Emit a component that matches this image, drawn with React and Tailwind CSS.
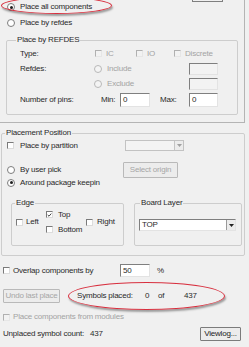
import clsx from 'clsx';

const Radio = ({ checked, disabled }) => (
    <span
        className={clsx(
            "w-[8px] h-[8px] rounded-full border flex items-center justify-center shrink-0",
            disabled ? "border-[#b8b8b8] bg-[#f4f4f4]" : "border-[#7d7d7d] bg-white"
        )}
    >
        {checked && <span className="w-[3px] h-[3px] rounded-full bg-[#1e1e1e]" />}
    </span>
);

const Check = ({ checked, disabled }) => (
    <span
        className={clsx(
            "w-[7px] h-[7px] border shrink-0 flex items-center justify-center",
            disabled
                ? "border-t-[#b0b0b0] border-l-[#b0b0b0] border-b-[#e6e6e6] border-r-[#e6e6e6] bg-[#f2f2f2]"
                : "border-t-[#7a7a7a] border-l-[#7a7a7a] border-b-[#dcdcdc] border-r-[#dcdcdc] bg-white"
        )}
    >
        {checked && (
            <svg viewBox="0 0 7 7" className="w-[6px] h-[6px]">
                <path d="M1 3.5 L2.8 5.2 L6 1.5" fill="none" stroke="#1e1e1e" strokeWidth="1.2" />
            </svg>
        )}
    </span>
);

const TextBox = ({ value, disabled, className }) => (
    <div
        className={clsx(
            "border border-t-[#7f7f7f] border-l-[#7f7f7f] border-b-[#e3e3e3] border-r-[#e3e3e3] flex items-center pl-[2px] leading-none",
            disabled ? "bg-[#f3f3f3] text-[#8a8a8a]" : "bg-white",
            className
        )}
    >
        {value}
    </div>
);

const Button = ({ children, disabled, className }) => (
    <div
        className={clsx(
            "border rounded-[1px] flex items-center justify-center leading-none bg-[#ececec] shrink-0",
            disabled ? "border-[#b9b9b9] text-[#a6a6a6]" : "border-[#7b7b7b] text-[#222]",
            className
        )}
    >
        {children}
    </div>
);

const Arrow = ({ disabled }) => (
    <span
        className={clsx(
            "w-[9px] h-full border-l flex items-center justify-center bg-[#ececec]",
            disabled ? "border-[#c4c4c4]" : "border-[#9a9a9a]"
        )}
    >
        <svg viewBox="0 0 5 3" className="w-[5px] h-[3px]">
            <path d="M0 0 H5 L2.5 3 Z" fill={disabled ? '#a0a0a0' : '#222'} />
        </svg>
    </span>
);

const Group = ({ title, titleClass, className, children }) => (
    <fieldset className={clsx("border border-[#cdcdcd] rounded-[2px] min-w-0", className)}>
        <legend className={clsx("px-[1px] leading-none", titleClass)}>{title}</legend>
        {children}
    </fieldset>
);

const Ellipse = ({ className }) => (
    <div
        className={clsx(
            "absolute rounded-[50%] border-[1.5px] border-[#d8303f] shadow-[1px_2px_2px_rgba(0,0,0,0.35)] pointer-events-none",
            className
        )}
    />
);

export default function App() {
    return (
        <div
            className="relative w-[249px] h-[347px] overflow-hidden bg-[#f0f0f0] text-[8px] tracking-[-0.2px] text-[#2a2a2a] leading-none whitespace-nowrap"
            style={{ fontFamily: '"Liberation Sans", Arial, sans-serif' }}
        >
            {/* Place by refdes section */}
            <div className="relative w-[245px] h-[123px] border-r border-b border-[#b4b4b4]">
                <div className="flex items-start h-[14px]">
                    <div className="flex items-center gap-[5px] pl-[7px] h-[14px]">
                        <Radio checked />
                        <span>Place all components</span>
                    </div>
                    <div className="ml-auto mr-[21px] -mt-[1px] w-[31px] h-[3px] border-x border-b border-[#7f7f7f]" />
                </div>
                <div className="flex items-center gap-[5px] pl-[7px] h-[14px] mt-[2px]">
                    <Radio />
                    <span>Place by refdes</span>
                </div>

                <Group title="Place by REFDES" titleClass="ml-[9px]" className="ml-[6px] mt-[6px] w-[232px] h-[79px]">
                    <div className="pl-[13px] pt-[2px]">
                        <div className="flex items-center h-[15px]">
                            <span className="w-[75px]">Type:</span>
                            <div className="flex items-center gap-[4px] w-[41px] text-[#a3a3a3]">
                                <Check disabled />
                                <span>IC</span>
                            </div>
                            <div className="flex items-center gap-[4px] w-[38px] text-[#a3a3a3]">
                                <Check disabled />
                                <span>IO</span>
                            </div>
                            <div className="flex items-center gap-[4px] text-[#a3a3a3]">
                                <Check disabled />
                                <span>Discrete</span>
                            </div>
                        </div>
                        <div className="flex items-center h-[15px]">
                            <span className="w-[74px]">Refdes:</span>
                            <div className="flex items-center gap-[5px] w-[95px] text-[#a3a3a3]">
                                <Radio disabled />
                                <span>Include</span>
                            </div>
                            <TextBox disabled className="w-[29px] h-[12px]" />
                        </div>
                        <div className="flex items-center h-[15px]">
                            <span className="w-[74px]" />
                            <div className="flex items-center gap-[5px] w-[95px] text-[#a3a3a3]">
                                <Radio disabled />
                                <span>Exclude</span>
                            </div>
                            <TextBox disabled className="w-[29px] h-[12px]" />
                        </div>
                        <div className="flex items-center h-[15px] mt-[1px]">
                            <span className="w-[81px]">Number of pins:</span>
                            <span className="w-[19px]">Min:</span>
                            <TextBox value="0" className="w-[30px] h-[14px]" />
                            <span className="w-[10px]" />
                            <span className="w-[29px]">Max:</span>
                            <TextBox value="0" className="w-[29px] h-[14px]" />
                        </div>
                    </div>
                </Group>
                <Ellipse className="left-[1px] -top-[3px] w-[111px] h-[17px]" />
            </div>

            {/* Placement position */}
            <Group title="Placement Position" titleClass="ml-[3px]" className="ml-[1px] mt-[6px] w-[244px] h-[127px]">
                <div className="pl-[5px]">
                    <div className="flex items-center h-[13px] mt-[2px]">
                        <div className="flex items-center gap-[6px] w-[118px]">
                            <Check />
                            <span>Place by partition</span>
                        </div>
                        <div className="w-[59px] h-[11px] flex border border-[#c2c2c2] bg-[#f3f3f3]">
                            <span className="flex-1" />
                            <Arrow disabled />
                        </div>
                    </div>
                    <div className="flex items-center h-[16px] mt-[10px]">
                        <div className="flex items-center gap-[5px] w-[116px]">
                            <Radio />
                            <span>By user pick</span>
                        </div>
                        <Button disabled className="w-[55px] h-[16px]">Select origin</Button>
                    </div>
                    <div className="flex items-center gap-[5px] h-[9px]">
                        <Radio checked />
                        <span>Around package keepin</span>
                    </div>

                    <div className="flex mt-[12px] gap-[10px]">
                        <Group title="Edge" titleClass="ml-[3px]" className="ml-[4px] w-[113px] h-[47px]">
                            <div className="flex h-[30px]">
                                <div className="flex items-center gap-[3px] pl-[4px] w-[34px]">
                                    <Check />
                                    <span>Left</span>
                                </div>
                                <div className="flex flex-col w-[40px]">
                                    <div className="flex items-center gap-[5px] h-[15px]">
                                        <Check checked />
                                        <span>Top</span>
                                    </div>
                                    <div className="flex items-center gap-[5px] h-[15px]">
                                        <Check />
                                        <span>Bottom</span>
                                    </div>
                                </div>
                                <div className="flex items-center gap-[4px]">
                                    <Check />
                                    <span>Right</span>
                                </div>
                            </div>
                        </Group>
                        <Group title="Board Layer" titleClass="ml-[5px]" className="w-[108px] h-[47px]">
                            <div className="ml-[4px] mt-[12px] w-[97px] h-[12px] flex border border-t-[#7f7f7f] border-l-[#7f7f7f] border-b-[#e3e3e3] border-r-[#e3e3e3] bg-white">
                                <span className="flex-1 flex items-center pl-[2px]">TOP</span>
                                <Arrow />
                            </div>
                        </Group>
                    </div>
                </div>
            </Group>

            {/* Bottom controls */}
            <div className="flex items-center h-[13px] mt-[8px] pl-[3px]">
                <div className="flex items-center gap-[3px] w-[117px]">
                    <Check />
                    <span>Overlap components by</span>
                </div>
                <TextBox value="50" className="w-[30px] h-[13px]" />
                <span className="ml-[7px]">%</span>
            </div>

            <div className="relative flex items-center h-[14px] mt-[12px]">
                <Button disabled className="ml-[3px] w-[57px] h-[14px]">Undo last place</Button>
                <span className="ml-[17px] w-[68px]">Symbols placed:</span>
                <span className="w-[13px]">0</span>
                <span className="w-[26px]">of</span>
                <span>437</span>
                <Ellipse className="left-[68px] -top-[7px] w-[157px] h-[28px]" />
            </div>

            <div className="flex items-center gap-[3px] h-[12px] mt-[8px] pl-[3px] text-[#a3a3a3]">
                <Check disabled />
                <span>Place components from modules</span>
            </div>

            <div className="flex items-center h-[14px] mt-[4px] pl-[3px]">
                <span className="mr-[6px]">Unplaced symbol count:</span>
                <span>437</span>
                <Button className="ml-auto mr-[8px] w-[41px] h-[14px]">Viewlog...</Button>
            </div>
        </div>
    );
}
